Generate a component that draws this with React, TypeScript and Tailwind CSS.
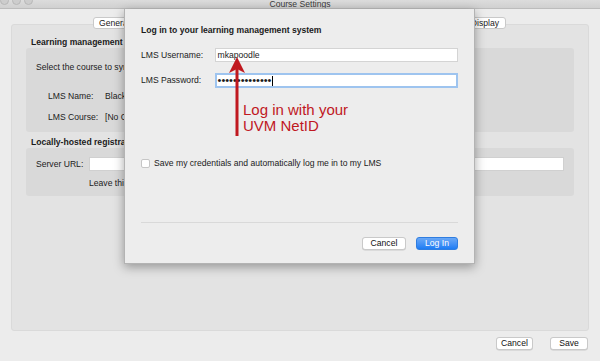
import React from "react";

const font = { fontFamily: '"Liberation Sans", Arial, sans-serif' };

const MacButton: React.FC<{ label: string; primary?: boolean; className?: string }> = ({
  label,
  primary,
  className = "",
}) => (
  <div
    className={`h-[13px] flex items-center justify-center rounded-[3px] text-[8.6px] leading-none ${
      primary
        ? "bg-gradient-to-b from-[#69a8f6] to-[#1a7cf4] text-white border border-[#2f7de0]"
        : "bg-white text-[#111] border border-[#c9c9c9] shadow-[0_0.5px_0.5px_rgba(0,0,0,0.15)]"
    } ${className}`}
  >
    {label}
  </div>
);

const LoginSheet: React.FC = () => (
  <div className="absolute z-20 left-[124px] top-[9px] w-[351px] h-[255px] bg-[#ededed] border-x border-b border-[#b3b3b3] shadow-[0_3px_10px_rgba(0,0,0,0.35)] px-[16px] pt-[15px] text-[8.6px] text-[#1b1b1b]">
    <div className="h-[12px] leading-[12px] font-bold">
      Log in to your learning management system
    </div>

    <div className="mt-[12px] flex items-center h-[14px]">
      <span className="w-[74px]">LMS Username:</span>
      <div className="w-[245px] h-[14px] bg-white border border-[#d4d4d4] flex items-center pl-[2px]">
        mkapoodle
      </div>
    </div>

    <div className="mt-[11px] flex items-center h-[15px]">
      <span className="w-[74px]">LMS Password:</span>
      <div className="w-[245px] h-[15px] bg-white border-2 border-[#9ec4ef] flex items-center pl-[1px]">
        <span className="text-[11px] leading-none">••••••••••••••</span>
        <span className="ml-[1px] w-px h-[10px] bg-black" />
      </div>
    </div>

    <div className="mt-[71px] flex items-center h-[9px] gap-[4px]">
      <div className="w-[9px] h-[9px] rounded-[2px] bg-white border border-[#c6c6c6]" />
      <span>Save my credentials and automatically log me in to my LMS</span>
    </div>

    <div className="mt-[54px] h-px bg-[#d9d9d9]" />

    <div className="mt-[14px] flex justify-end gap-[10px]">
      <MacButton label="Cancel" className="w-[44px]" />
      <MacButton label="Log In" primary className="w-[42px]" />
    </div>
  </div>
);

const Annotation: React.FC = () => (
  <>
    <svg className="absolute z-30 left-[226px] top-[55px]" width="22" height="84" viewBox="0 0 22 84">
      <rect x="9.5" y="10" width="3" height="71" fill="#c0181f" />
      <path d="M11 2 L19 18 L11 14 L3 18 Z" fill="#c0181f" />
    </svg>
    <div className="absolute z-30 left-[243px] top-[102px] text-[15px] leading-[16px] text-[#c0181f]">
      <div>Log in with your</div>
      <div>UVM NetID</div>
    </div>
  </>
);

export default function App() {
  return (
    <div style={font} className="relative w-[600px] h-[361px] overflow-hidden bg-[#ececec] text-[8.6px] text-[#1b1b1b]">
      {/* title bar */}
      <div className="relative h-[9px] bg-gradient-to-b from-[#dcdcdc] to-[#d0d0d0] border-b border-[#bcbcbc] overflow-hidden">
        <div className="absolute left-[0px] -top-[4px] flex gap-[3px]">
          <div className="w-[9px] h-[9px] rounded-full bg-[#cdcdcd] border border-[#b8b8b8]" />
          <div className="w-[9px] h-[9px] rounded-full bg-[#cdcdcd] border border-[#b8b8b8]" />
          <div className="w-[9px] h-[9px] rounded-full bg-[#cdcdcd] border border-[#b8b8b8]" />
        </div>
        <div className="text-center leading-[8px] text-[#3a3a3a]">Course Settings</div>
      </div>

      <div className="px-[11px] pt-[8px]">
        {/* tabs */}
        <div className="relative z-10 flex h-[12px] ml-[82px] w-[413px] bg-white border border-[#c9c9c9] rounded-[3px]">
          <div className="px-[5px] leading-[10px]">General</div>
          <div className="flex-1" />
          <div className="px-[6px] leading-[10px]">Display</div>
        </div>

        {/* tab content */}
        <div className="-mt-[5px] h-[307px] bg-[#e3e3e3] border border-[#dadada] rounded-[3px] pt-[12px]">
          <div className="h-[11px] leading-[11px] pl-[19px] font-bold">
            Learning management system
          </div>
          <div className="mx-[14px] h-[84px] bg-[#d9d9d9] rounded-[3px] px-[10px] pt-[13px]">
            <div className="leading-[12px]">Select the course to synchronize with your LMS</div>
            <div className="mt-[17px] flex leading-[12px] pl-[12px]">
              <span className="w-[57px]">LMS Name:</span>
              <span>Blackboard</span>
            </div>
            <div className="mt-[9px] flex leading-[12px] pl-[12px]">
              <span className="w-[57px]">LMS Course:</span>
              <span>[No Course Selected]</span>
            </div>
          </div>

          <div className="mt-[5px] h-[11px] leading-[11px] pl-[19px] font-bold">
            Locally-hosted registration server
          </div>
          <div className="mx-[14px] h-[48px] bg-[#d9d9d9] rounded-[3px] pl-[10px] pr-[10px] pt-[9px]">
            <div className="flex items-center h-[14px]">
              <span className="w-[53px]">Server URL:</span>
              <div className="flex-1 h-[14px] bg-white border border-[#d0d0d0]" />
            </div>
            <div className="mt-[6px] pl-[53px] leading-[12px]">
              Leave this blank to use the default server
            </div>
          </div>
        </div>

        <div className="mt-[6px] flex justify-end gap-[17px] pr-[1px]">
          <MacButton label="Cancel" className="w-[37px]" />
          <MacButton label="Save" className="w-[38px]" />
        </div>
      </div>

      <LoginSheet />
      <Annotation />
    </div>
  );
}
